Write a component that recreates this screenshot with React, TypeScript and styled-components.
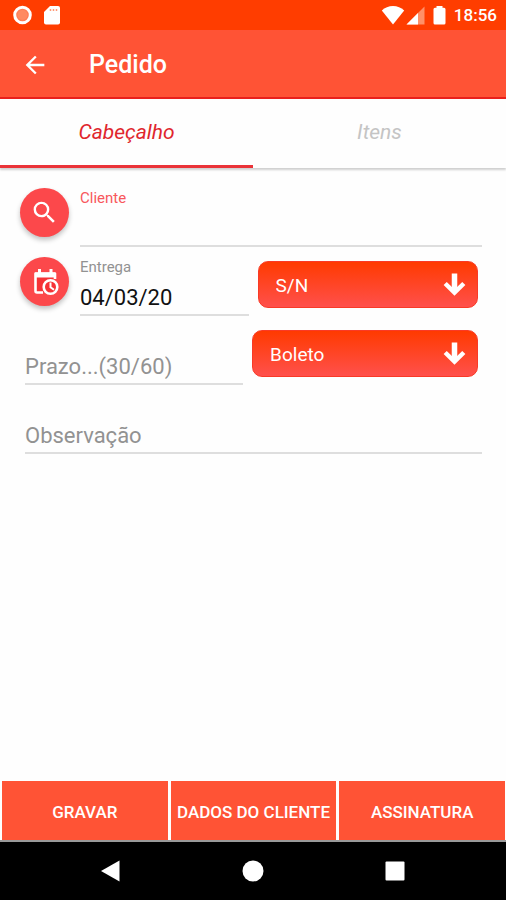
import React from "react";
import styled, { createGlobalStyle } from "styled-components";
import { MdArrowBack, MdSearch } from "react-icons/md";

const GlobalStyle = createGlobalStyle`
  *, *::before, *::after { box-sizing: border-box; }
  body { margin: 0; background: #fefefe; font-family: Roboto, "Liberation Sans", sans-serif; }
  button, input, select { font: inherit; margin: 0; }
`;

const Screen = styled.div`
  display: flex;
  flex-direction: column;
  min-height: 100vh;
  background: #fefefe;
`;

const StatusBar = styled.div`
  display: flex;
  align-items: center;
  justify-content: space-between;
  height: 30px;
  padding: 0 9px 0 12px;
  background: #ff3d00;
  color: #fff;
  font-size: 17px;
  font-weight: 500;
  line-height: 32px;
`;

const StatusGroup = styled.div<{ $gap: number }>`
  display: flex;
  align-items: center;
  gap: ${(p) => p.$gap}px;

  svg { display: block; }
`;

const AppBar = styled.header`
  display: flex;
  align-items: center;
  gap: 40px;
  height: 69px;
  padding: 2px 21px 0;
  background: #ff5335;
  border-bottom: 2px solid #e9201c;
  color: #fff;
`;

const BackButton = styled.button`
  display: flex;
  padding: 0;
  border: 0;
  background: none;
  color: inherit;
`;

const Title = styled.h1`
  margin: 0;
  font-size: 25px;
  font-weight: 500;
  line-height: 32px;
`;

const TabBar = styled.div`
  display: flex;
  height: 69px;
  box-shadow: 0 2px 2px #cfcfcf;
`;

const Tab = styled.button<{ $active?: boolean }>`
  flex: 1;
  padding: 0 0 1px;
  border: 0;
  border-bottom: 3px solid ${(p) => (p.$active ? "#ea3338" : "transparent")};
  background: #fefefe;
  color: ${(p) => (p.$active ? "#e0262d" : "#c4c4c4")};
  font-size: 21px;
  font-style: italic;
`;

const Form = styled.form`
  flex: 1;
  padding: 10px 24px 24px 20px;
`;

const Row = styled.div<{ $inset?: boolean; $gap: number }>`
  display: flex;
  align-items: stretch;
  gap: ${(p) => p.$gap}px;
  height: 69px;
  padding-left: ${(p) => (p.$inset ? 5 : 0)}px;
`;

const DateGroup = styled.div`
  display: flex;
  flex: 57 1 0;
  gap: 11px;
  min-width: 0;
`;

const RoundButton = styled.button`
  display: flex;
  flex: none;
  align-items: center;
  justify-content: center;
  width: 49px;
  height: 49px;
  margin-top: 10px;
  padding: 0;
  border: 0;
  border-radius: 50%;
  background: #fc484b;
  box-shadow: 0 3px 5px rgba(0, 0, 0, 0.24);
  color: #fff;
`;

const Field = styled.div<{ $grow?: number }>`
  display: flex;
  flex: ${(p) => p.$grow ?? 1} 1 0;
  flex-direction: column;
  justify-content: flex-end;
  gap: 8px;
  min-width: 0;
  padding-bottom: 1px;
  border-bottom: 2px solid #dedede;
`;

const Label = styled.label<{ $accent?: boolean }>`
  color: ${(p) => (p.$accent ? "#f8575c" : "#929292")};
  font-size: 15px;
  line-height: 16px;
`;

const Input = styled.input`
  width: 100%;
  height: 30px;
  padding: 0;
  border: 0;
  outline: 0;
  background: none;
  color: #111;
  font-size: 22px;
  line-height: 30px;

  &::placeholder { color: #929292; opacity: 1; }
`;

const SelectBox = styled.div<{ $grow: number }>`
  position: relative;
  flex: ${(p) => p.$grow} 1 0;
  height: 47px;
  margin: 14px 4px 0 0;

  svg {
    position: absolute;
    top: 12px;
    right: 12px;
    pointer-events: none;
  }
`;

const Select = styled.select`
  width: 100%;
  height: 100%;
  padding: 2px 40px 0 17px;
  border: 1px solid #f93a27;
  border-radius: 10px;
  appearance: none;
  background: linear-gradient(#ff3a00, #ff504c);
  color: #fff;
  font-size: 19px;

  option { color: #111; }
`;

const Actions = styled.div`
  display: grid;
  grid-template-columns: repeat(3, 1fr);
  gap: 3px;
  padding: 0 1px 0 2px;
  border-bottom: 2px solid #999;
`;

const ActionButton = styled.button`
  height: 59px;
  padding: 2px 0 0;
  border: 0;
  background: #ff5335;
  color: #fff;
  font-size: 17px;
  font-weight: 500;
  white-space: nowrap;
`;

const NavBar = styled.nav`
  display: flex;
  align-items: center;
  justify-content: center;
  gap: 120px;
  height: 58px;
  background: #000;
`;

const NavButton = styled.button`
  display: flex;
  padding: 0;
  border: 0;
  background: none;
`;

const RecordIcon = () => (
  <svg width="21" height="20" viewBox="0 0 21 20">
    <circle cx="10.5" cy="10" r="7.8" fill="#ff7d55" stroke="#fff" strokeWidth="3" />
    <circle cx="10.5" cy="10" r="5" fill="#ff8a62" />
  </svg>
);

const CardIcon = () => (
  <svg width="16" height="20" viewBox="0 0 16 20">
    <path d="M6 1h8a2 2 0 0 1 2 2v14.500a2 2 0 0 1-2 2H2a2 2 0 0 1-2-2V7z" fill="#fff" />
    <path d="M6.500 4v2M9.500 4v2M12.500 4v2" stroke="#ff9a78" strokeWidth="1.500" />
  </svg>
);

const WifiIcon = () => (
  <svg width="24" height="20" viewBox="0 0 24 20">
    <path d="M12 19.500L.8 5.500Q5.500 1 12 1t11.200 4.500z" fill="#fff" />
  </svg>
);

const SignalIcon = () => (
  <svg width="19" height="20" viewBox="0 0 19 20">
    <path d="M18.500 1.500v18H.5z" fill="#ff9068" />
    <path d="M12 8v11.500H.5z" fill="#fff" />
  </svg>
);

const BatteryIcon = () => (
  <svg width="13" height="20" viewBox="0 0 13 20">
    <path d="M3.500 1h6v1.800H11q1.500 0 1.500 1.500V18q0 1.500-1.500 1.500H2Q.5 19.500.5 18V4.300q0-1.500 1.500-1.500h1.500z" fill="#fff" />
  </svg>
);

const CalendarClockIcon = () => (
  <svg width="28" height="30" viewBox="0 0 28 30" fill="none">
    <path d="M5 8h18v17H5z" fill="#f63337" />
    <path d="M24 12V6.500H4.500v17.500a1.500 1.500 0 0 0 1.500 1.500H12" stroke="#fff" strokeWidth="2.600" strokeLinejoin="round" />
    <path d="M4 5.500h20v5H4z" fill="#fff" />
    <path d="M8.500 2v5M20 2v5" stroke="#fff" strokeWidth="3" />
    <circle cx="19.500" cy="20" r="6.800" fill="#f63337" stroke="#fff" strokeWidth="2.600" />
    <path d="M19.500 15.500v4.800l3.500 2.500" stroke="#fff" strokeWidth="2" />
  </svg>
);

const DownArrowIcon = () => (
  <svg width="23" height="23" viewBox="0 0 23 23" fill="none" stroke="#fff">
    <path d="M11.500 0.500v18" strokeWidth="5.500" />
    <path d="M2.200 10.500l9.300 9 9.300-9" strokeWidth="4.500" />
  </svg>
);

export default function App() {
  return (
    <Screen>
      <GlobalStyle />
      <StatusBar>
        <StatusGroup $gap={11}>
          <RecordIcon />
          <CardIcon />
        </StatusGroup>
        <StatusGroup $gap={8}>
          <StatusGroup $gap={1}>
            <WifiIcon />
            <SignalIcon />
          </StatusGroup>
          <BatteryIcon />
          <time>18:56</time>
        </StatusGroup>
      </StatusBar>

      <AppBar>
        <BackButton type="button" aria-label="Voltar">
          <MdArrowBack size={28} />
        </BackButton>
        <Title>Pedido</Title>
      </AppBar>

      <TabBar role="tablist">
        <Tab type="button" role="tab" aria-selected="true" $active>Cabeçalho</Tab>
        <Tab type="button" role="tab" aria-selected="false">Itens</Tab>
      </TabBar>

      <Form>
        <Row $gap={11}>
          <RoundButton type="button" aria-label="Buscar cliente">
            <MdSearch size={29} />
          </RoundButton>
          <Field>
            <Label htmlFor="cliente" $accent>Cliente</Label>
            <Input id="cliente" type="text" />
          </Field>
        </Row>

        <Row $gap={9}>
          <DateGroup>
            <RoundButton type="button" aria-label="Escolher data">
              <CalendarClockIcon />
            </RoundButton>
            <Field>
              <Label htmlFor="entrega">Entrega</Label>
              <Input id="entrega" type="text" defaultValue="04/03/20" />
            </Field>
          </DateGroup>
          <SelectBox $grow={55}>
            <Select aria-label="Tipo" defaultValue="S/N">
              <option>S/N</option>
            </Select>
            <DownArrowIcon />
          </SelectBox>
        </Row>

        <Row $inset $gap={9}>
          <Field $grow={28}>
            <Input aria-label="Prazo" type="text" placeholder="Prazo...(30/60)" />
          </Field>
          <SelectBox $grow={29}>
            <Select aria-label="Forma de pagamento" defaultValue="Boleto">
              <option>Boleto</option>
            </Select>
            <DownArrowIcon />
          </SelectBox>
        </Row>

        <Row $inset $gap={9}>
          <Field>
            <Input aria-label="Observação" type="text" placeholder="Observação" />
          </Field>
        </Row>
      </Form>

      <Actions>
        <ActionButton type="button">GRAVAR</ActionButton>
        <ActionButton type="button">DADOS DO CLIENTE</ActionButton>
        <ActionButton type="button">ASSINATURA</ActionButton>
      </Actions>

      <NavBar>
        <NavButton type="button" aria-label="Voltar">
          <svg width="22" height="22" viewBox="0 0 22 22"><path d="M19.500 .5v21L1 11z" fill="#fff" /></svg>
        </NavButton>
        <NavButton type="button" aria-label="Início">
          <svg width="22" height="22" viewBox="0 0 22 22"><circle cx="11" cy="11" r="10.500" fill="#fff" /></svg>
        </NavButton>
        <NavButton type="button" aria-label="Recentes">
          <svg width="22" height="22" viewBox="0 0 22 22"><rect x="1.500" y="1.500" width="19" height="19" rx="1" fill="#fff" /></svg>
        </NavButton>
      </NavBar>
    </Screen>
  );
}
